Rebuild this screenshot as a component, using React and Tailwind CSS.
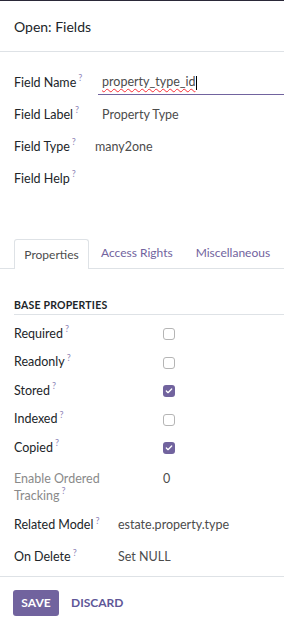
import { Check } from "lucide-react";

const purple = "text-[#71639e]";

function Q() {
  return <sup className="ml-[2px] text-[9px] text-[#8f86b8] -top-[0.6em]">?</sup>;
}

function TopRow({ label, children, valueClass = "pl-[4px]" }) {
  return (
    <div className="flex h-[32px] items-center">
      <div className="w-[84px] shrink-0 whitespace-nowrap text-[#212529]">
        {label}
        <Q />
      </div>
      <div className={`flex-1 ${valueClass}`}>{children}</div>
    </div>
  );
}

function Box({ checked }) {
  return checked ? (
    <span className="flex h-[12px] w-[12px] items-center justify-center rounded-[3px] bg-[#71639e]">
      <Check size={8} strokeWidth={4} color="white" />
    </span>
  ) : (
    <span className="block h-[12px] w-[12px] rounded-[3px] border border-[#b5b5b5] bg-white" />
  );
}

function PropRow({ label, children }) {
  return (
    <div className="flex h-[28.5px] items-center">
      <div className="w-[149px] shrink-0 text-[#212529]">
        {label}
        <Q />
      </div>
      <div className="flex-1">{children}</div>
    </div>
  );
}

export default function App() {
  const props = [
    ["Required", false],
    ["Readonly", false],
    ["Stored", true],
    ["Indexed", false],
    ["Copied", true],
  ];

  return (
    <div className="h-[620px] w-[284px] overflow-hidden bg-white font-['Lato',sans-serif] text-[12.5px] text-[#4c4c4c]">
      <div className="h-[1px] bg-[#2a2838]" />
      <div className="flex h-[51px] items-center border-b border-[#dee2e6] px-[14px] text-[14px] text-[#212529]">
        Open: Fields
      </div>

      <div className="px-[14px] pt-[15px]">
        <TopRow label="Field Name" valueClass="">
          <div className="mr-[-14px] flex h-[24px] items-center border-b border-[#71639e] pl-[4px] text-[#4c4c4c]">
            <span className="underline decoration-wavy decoration-red-500 decoration-[1px] underline-offset-2">
              property_type_id
            </span>
            <span className="ml-[1px] h-[14px] w-[1px] bg-black" />
          </div>
        </TopRow>
        <TopRow label="Field Label">Property Type</TopRow>
        <TopRow label="Field Type" valueClass="-ml-[3px]">many2one</TopRow>
        <TopRow label="Field Help" />
      </div>

      <div className="mt-[44px] flex h-[30px] items-end whitespace-nowrap border-b border-[#dee2e6] pl-[14px] text-[12px]">
        <div className="mb-[-1px] flex h-[30px] w-[75px] items-center justify-center rounded-t-[3px] border border-b-0 border-[#dee2e6] bg-white text-[#4c4c4c]">
          Properties
        </div>
        <div className={`flex h-[30px] items-center pl-[12px] ${purple}`}>Access Rights</div>
        <div className={`flex h-[30px] items-center pl-[23px] ${purple}`}>Miscellaneous</div>
      </div>

      <div className="px-[14px] pt-[29px]">
        <div className="mr-[-14px] flex h-[17px] items-center border-b border-[#dee2e6] pb-[1px] text-[10.5px] font-bold tracking-[0.2px] text-[#212529]">
          BASE PROPERTIES
        </div>
        <div className="pt-[5px]">
          {props.map(([l, c]) => (
            <PropRow key={l} label={l}>
              <Box checked={c} />
            </PropRow>
          ))}
        </div>
        <div className="flex pt-[7px]">
          <div className="w-[149px] shrink-0 leading-[17px] text-[#8a8a8a]">
            Enable Ordered
            <br />
            Tracking
            <Q />
          </div>
          <div className="leading-[17px]">0</div>
        </div>
        <div className="flex h-[34px] items-center pt-[10px]">
          <div className="w-[104px] shrink-0 text-[#212529]">
            Related Model
            <Q />
          </div>
          <div>estate.property.type</div>
        </div>
        <div className="flex h-[34px] items-center pt-[6px]">
          <div className="w-[104px] shrink-0 text-[#212529]">
            On Delete
            <Q />
          </div>
          <div>Set NULL</div>
        </div>
      </div>

      <div className="mt-[4px] flex items-center gap-[12px] border-t border-[#dee2e6] px-[13px] pt-[13px]">
        <button className="h-[26px] w-[46px] rounded-[3px] bg-[#71639e] text-[12px] font-bold text-white">
          SAVE
        </button>
        <button className="text-[12px] font-bold text-[#5e5798]">DISCARD</button>
      </div>
    </div>
  );
}
